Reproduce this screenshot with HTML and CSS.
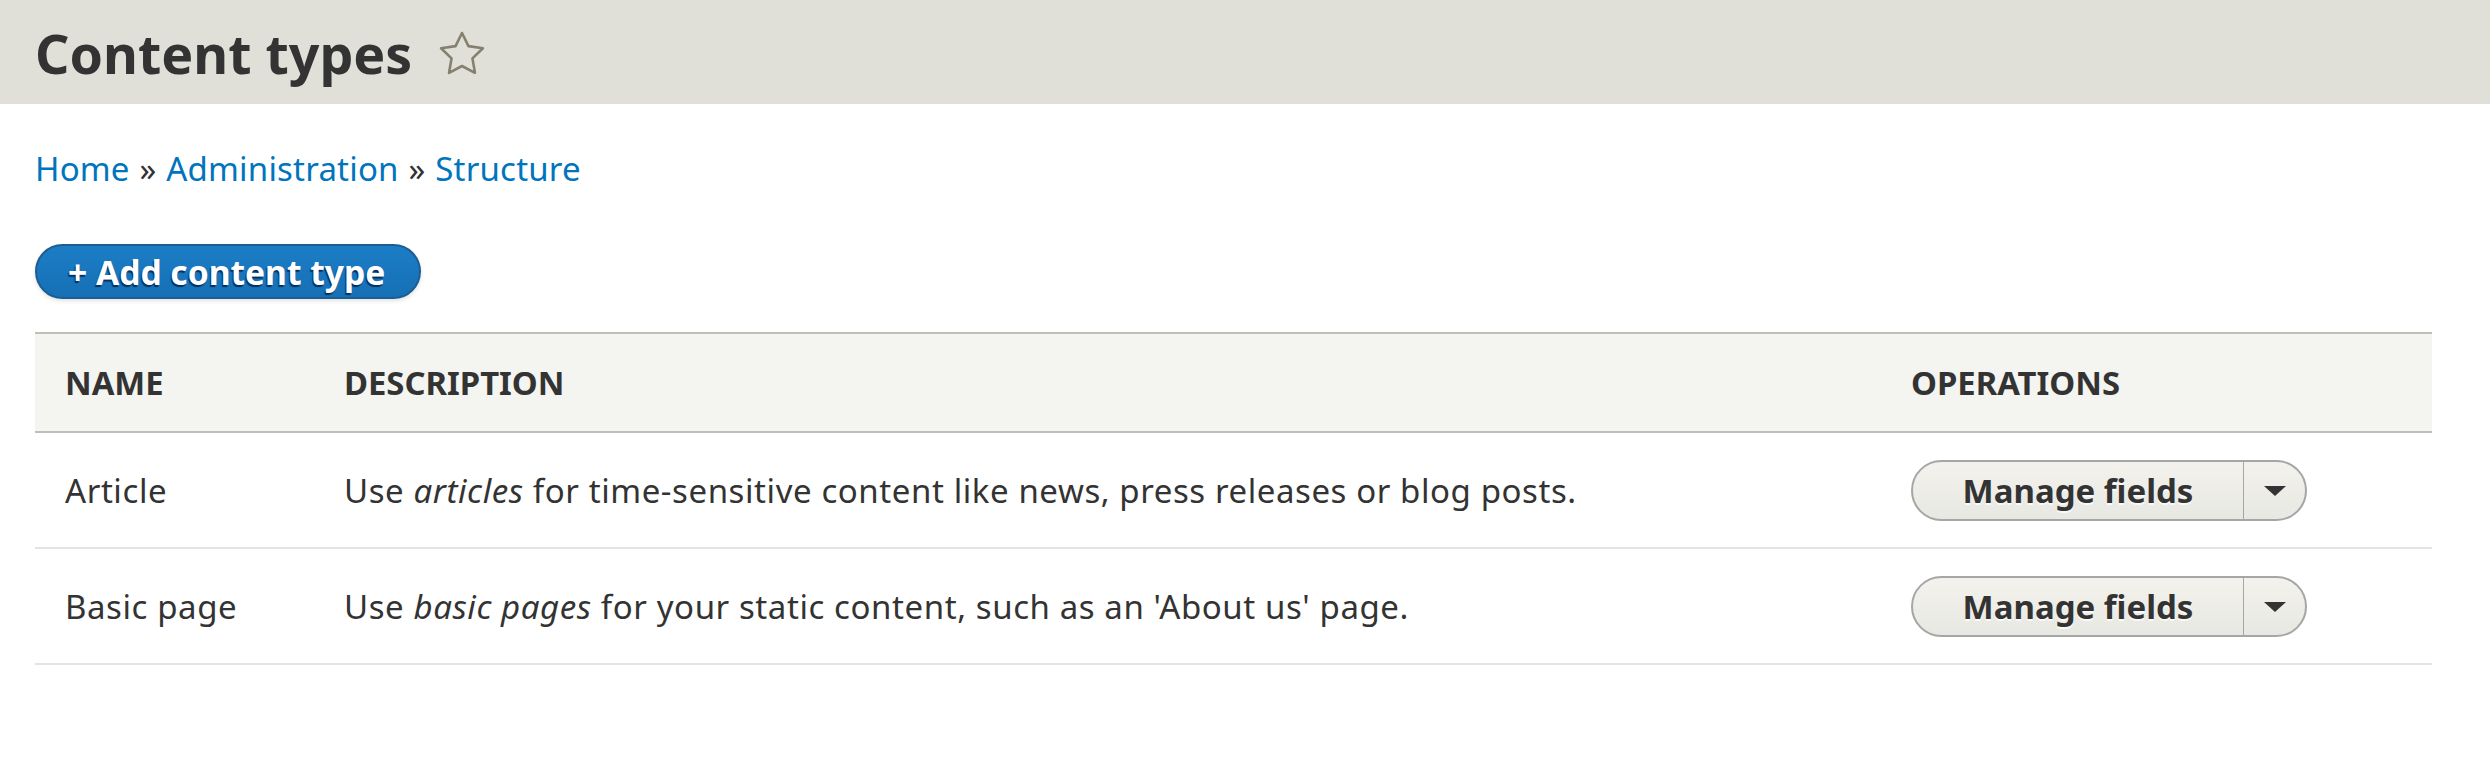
FILE: index.html
```html
<!DOCTYPE html>
<html lang="en">
<head>
<meta charset="utf-8">
<title>Content types</title>
<link rel="stylesheet" href="styles.css">
</head>
<body>
<header class="page-header">
  <h1 class="page-title">Content types</h1>
  <span class="shortcut-star">
    <svg width="48" height="48" viewBox="0 0 48 48" aria-hidden="true">
      <polygon points="24,3 30.47,16.1 44.92,18.2 34.46,28.4 36.93,42.8 24,36 11.07,42.8 13.54,28.4 3.08,18.2 17.53,16.1" fill="none" stroke="#85806f" stroke-width="2.6" stroke-linejoin="round"/>
    </svg>
  </span>
</header>
<main class="page-content">
  <nav class="breadcrumb">
    <a href="#">Home</a> <span class="sep">»</span> <a href="#">Administration</a> <span class="sep">»</span> <a href="#">Structure</a>
  </nav>
  <div class="action-links">
    <a class="button-primary" href="#">+ Add content type</a>
  </div>
  <table class="types-table">
    <colgroup>
      <col class="col-name">
      <col class="col-desc">
      <col class="col-ops">
    </colgroup>
    <thead>
      <tr><th>Name</th><th>Description</th><th>Operations</th></tr>
    </thead>
    <tbody>
      <tr>
        <td>Article</td>
        <td>Use <em>articles</em> for time-sensitive content like news, press releases or blog posts.</td>
        <td><div class="dropbutton"><a class="dropbutton-action" href="#">Manage fields</a><span class="dropbutton-toggle"><span class="arrow"></span></span></div></td>
      </tr>
      <tr>
        <td>Basic page</td>
        <td>Use <em>basic pages</em> for your static content, such as an 'About us' page.</td>
        <td><div class="dropbutton"><a class="dropbutton-action" href="#">Manage fields</a><span class="dropbutton-toggle"><span class="arrow"></span></span></div></td>
      </tr>
    </tbody>
  </table>
</main>
</body>
</html>
```
FILE: styles.css
```css
html, body {
  margin: 0;
  padding: 0;
  background: #ffffff;
}
body {
  font-family: "Noto Sans", "DejaVu Sans", sans-serif;
  color: #333333;
}
.page-header {
  background: #e0e0d8;
  height: 104px;
  box-sizing: border-box;
  padding: 22px 35px 0;
  display: flex;
  align-items: flex-start;
}
.page-title {
  margin: 0;
  font-size: 53.7px;
  line-height: 64px;
  font-weight: 700;
  color: #333333;
}
.shortcut-star {
  margin-left: 26px;
  height: 64px;
  display: flex;
  align-items: center;
}
.shortcut-star svg {
  display: block;
}
.page-content {
  padding: 0 58px 0 35px;
}
.breadcrumb {
  margin-top: 45px;
  font-size: 33px;
  line-height: 40px;
  letter-spacing: 0.2px;
  color: #333333;
}
.breadcrumb a {
  color: #0074bd;
  text-decoration: none;
}
.breadcrumb .sep {
  margin: 0 1px;
}
.action-links {
  display: flex;
  margin-top: 55px;
}
.button-primary {
  display: inline-block;
  font-size: 33.6px;
  line-height: 40px;
  font-weight: 700;
  padding: 5.5px 34px 5.5px 31px;
  border: 2px solid #1c5e93;
  border-radius: 999px;
  background: linear-gradient(to bottom, #1b7dc6, #1670b5);
  color: #ffffff;
  text-decoration: none;
  text-shadow: -1px 2px 1px rgba(0, 30, 70, 0.8);
  box-shadow: 0 2px 4px rgba(0, 0, 0, 0.12);
}
.types-table {
  width: 100%;
  margin-top: 33px;
  border-collapse: collapse;
  table-layout: fixed;
  border-top: 2px solid #bfbfba;
}
.col-name { width: 279px; }
.col-desc { width: 1567px; }
.types-table th {
  background: #f4f4f0;
  border-bottom: 2px solid #bfbfba;
  padding: 28.5px 30px;
  font-size: 32.8px;
  line-height: 40px;
  text-align: left;
  text-transform: uppercase;
  font-weight: 700;
  color: #333333;
}
.types-table td {
  padding: 27px 30px 26px;
  font-size: 33px;
  line-height: 40px;
  letter-spacing: 0.58px;
  vertical-align: middle;
  border-bottom: 2px solid #e4e4df;
  color: #333333;
}
.types-table em {
  font-style: italic;
}
.dropbutton {
  display: inline-flex;
  height: 61px;
  box-sizing: border-box;
  border: 2px solid #a6a6a6;
  border-radius: 999px;
  background: linear-gradient(to bottom, #f3f2ed, #e8e8e2);
  overflow: hidden;
  vertical-align: middle;
  letter-spacing: 0;
}
.dropbutton-action {
  width: 330px;
  display: flex;
  align-items: center;
  justify-content: center;
  font-size: 33px;
  line-height: 40px;
  font-weight: 700;
  color: #333333;
  text-decoration: none;
  text-shadow: 0 2px 0 rgba(255, 255, 255, 0.7);
}
.dropbutton-toggle {
  width: 61px;
  border-left: 1px solid #a6a6a6;
  display: flex;
  align-items: center;
  justify-content: center;
}
.arrow {
  width: 0;
  height: 0;
  border-left: 11px solid transparent;
  border-right: 11px solid transparent;
  border-top: 10px solid #333333;
}
```
